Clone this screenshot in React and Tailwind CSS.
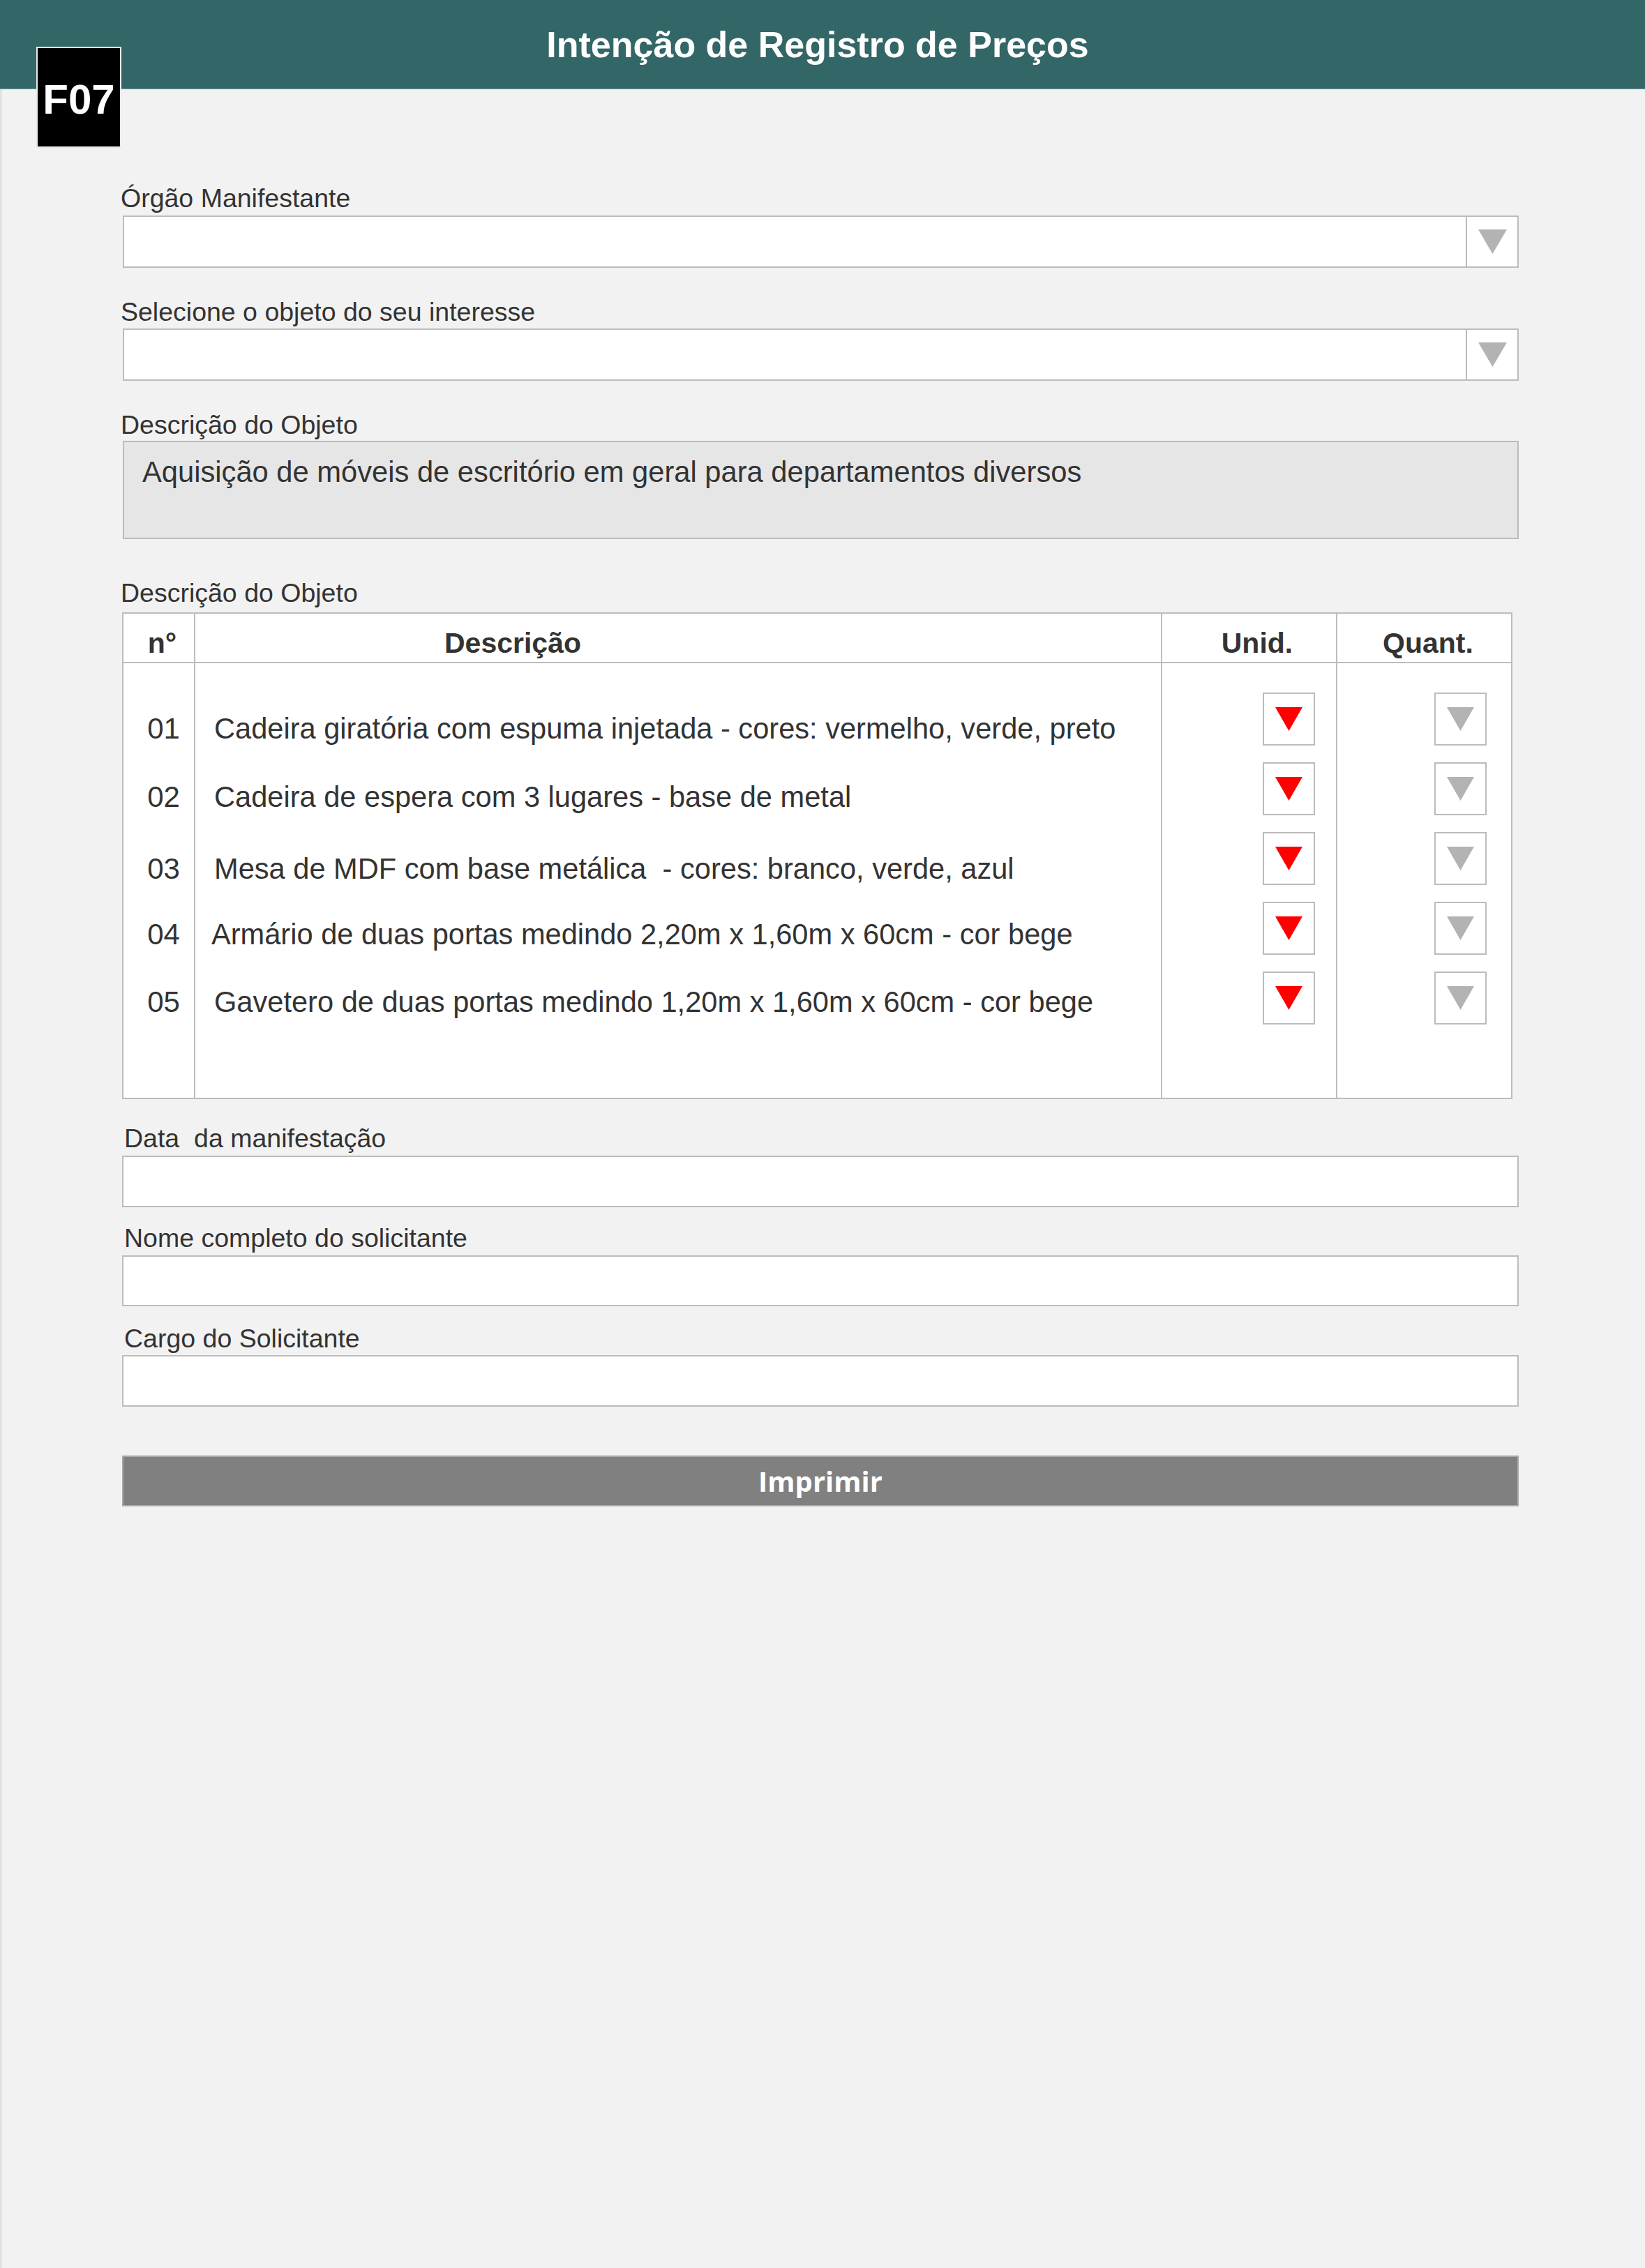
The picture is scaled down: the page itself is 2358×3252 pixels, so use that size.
import React from "react";

function Tri({ w, h, color }) {
  return (
    <svg width={w} height={h} viewBox={`0 0 ${w} ${h}`} className="block">
      <polygon points={`0,0 ${w},0 ${w / 2},${h}`} fill={color} />
    </svg>
  );
}

function Label({ children, className }) {
  return (
    <div className={`text-[37.5px] leading-[37px] h-[37px] whitespace-pre text-[#333333] ${className}`}>
      {children}
    </div>
  );
}

function Select() {
  return (
    <div className="h-[75px] border-2 border-[#bcbcbc] bg-white flex">
      <div className="flex-1" />
      <div className="w-[74px] border-l-2 border-[#bcbcbc] flex items-center justify-center">
        <Tri w={41} h={35} color="#b3b3b3" />
      </div>
    </div>
  );
}

const rows = [
  {
    n: "01",
    text: "Cadeira giratória com espuma injetada - cores: vermelho, verde, preto",
    pt: "pt-[31px]",
    pl: "pl-[27px]",
  },
  {
    n: "02",
    text: "Cadeira de espera com 3 lugares - base de metal",
    pt: "pt-[29px]",
    pl: "pl-[27px]",
  },
  {
    n: "03",
    text: "Mesa de MDF com base metálica  - cores: branco, verde, azul",
    pt: "pt-[32px]",
    pl: "pl-[27px]",
  },
  {
    n: "04",
    text: "Armário de duas portas medindo 2,20m x 1,60m x 60cm - cor bege",
    pt: "pt-[26px]",
    pl: "pl-[23px]",
  },
  {
    n: "05",
    text: "Gavetero de duas portas medindo 1,20m x 1,60m x 60cm - cor bege",
    pt: "pt-[23px]",
    pl: "pl-[27px]",
  },
];

function SmallSelect({ color }) {
  return (
    <div className="w-[75px] h-[76px] border-2 border-[#bcbcbc] bg-white flex items-center justify-center">
      <Tri w={39} h={34} color={color} />
    </div>
  );
}

export default function App() {
  return (
    <div className="relative min-h-[3252px] bg-[#f2f2f2] font-['Liberation_Sans',Arial,sans-serif] text-[#333333]">
      <div className="absolute left-0 top-[128px] bottom-0 w-[3px] bg-[#e2e2e2]" />
      <header className="h-[128px] bg-[#336666] border-b border-[#7a9c9c] flex items-center justify-center pr-[14px]">
        <h1 className="text-[52px] leading-none font-bold text-white">Intenção de Registro de Preços</h1>
      </header>

      <div className="absolute left-[52px] top-[67px] w-[122px] h-[145px] bg-black border-2 border-[#e9e9e9] flex items-center justify-center">
        <span className="text-white font-bold text-[60px] leading-none pt-[6px]">F07</span>
      </div>

      <main className="ml-[176px] w-[2001px]">
        <Label className="mt-[138px] mb-[6px] -ml-[3px]">Órgão Manifestante</Label>
        <Select />

        <Label className="mt-[45px] mb-[5px] -ml-[3px]">Selecione o objeto do seu interesse</Label>
        <Select />

        <Label className="mt-[45px] mb-[4px] -ml-[3px]">Descrição do Objeto</Label>
        <div className="h-[141px] border-2 border-[#bcbcbc] bg-[#e6e6e6] pl-[26px] pt-[22px]">
          <p className="text-[41.7px] leading-[42px] text-[#333333]">
            Aquisição de móveis de escritório em geral para departamentos diversos
          </p>
        </div>

        <Label className="mt-[59px] mb-[9px] -ml-[3px]">Descrição do Objeto</Label>
        <div className="w-[1993px] h-[698px] -ml-[1px] border-2 border-[#bcbcbc] bg-white flex flex-col overflow-hidden">
          <div className="h-[71px] shrink-0 border-b-2 border-[#bcbcbc] flex text-[41px] font-bold text-[#333333]">
            <div className="w-[103px] border-r-2 border-[#bcbcbc] flex items-center justify-center pl-[10px] pt-[16px] leading-none">
              n°
            </div>
            <div className="w-[1386px] border-r-2 border-[#bcbcbc] flex items-center pl-[357px] pt-[16px] leading-none">
              Descrição
            </div>
            <div className="w-[251px] border-r-2 border-[#bcbcbc] flex items-center justify-center pl-[23px] pt-[16px] leading-none">
              Unid.
            </div>
            <div className="flex-1 flex items-center justify-center pl-[11px] pt-[16px] leading-none">
              Quant.
            </div>
          </div>
          <div className="flex-1 flex">
            <div className="w-[103px] border-r-2 border-[#bcbcbc] pt-[42px]">
              {rows.map((r) => (
                <div key={r.n} className={`h-[100px] ${r.pt}`}>
                  <div className="text-[42px] leading-[42px] text-center pl-[14px]">{r.n}</div>
                </div>
              ))}
            </div>
            <div className="w-[1386px] border-r-2 border-[#bcbcbc] pt-[42px]">
              {rows.map((r) => (
                <div key={r.n} className={`h-[100px] ${r.pt}`}>
                  <div className={`text-[41.6px] leading-[42px] whitespace-pre ${r.pl}`}>{r.text}</div>
                </div>
              ))}
            </div>
            <div className="w-[251px] border-r-2 border-[#bcbcbc] pt-[42px] pr-[30px] flex flex-col items-end">
              {rows.map((r) => (
                <div key={r.n} className="h-[100px]">
                  <SmallSelect color="#ff0000" />
                </div>
              ))}
            </div>
            <div className="flex-1 pt-[42px] pr-[35px] flex flex-col items-end">
              {rows.map((r) => (
                <div key={r.n} className="h-[100px]">
                  <SmallSelect color="#b3b3b3" />
                </div>
              ))}
            </div>
          </div>
        </div>

        <Label className="mt-[38px] mb-[6px] ml-[2px]">Data  da manifestação</Label>
        <div className="h-[74px] w-[2002px] -ml-[1px] border-2 border-[#bcbcbc] bg-white" />

        <Label className="mt-[26px] mb-[6px] ml-[2px]">Nome completo do solicitante</Label>
        <div className="h-[73px] w-[2002px] -ml-[1px] border-2 border-[#bcbcbc] bg-white" />

        <Label className="mt-[28px] mb-[5px] ml-[2px]">Cargo do Solicitante</Label>
        <div className="h-[74px] w-[2002px] -ml-[1px] border-2 border-[#bcbcbc] bg-white" />

        <button
          type="button"
          className="mt-[70px] h-[73px] w-[2002px] -ml-[1px] bg-[#808080] border-2 border-[#a9a9a9] flex items-center justify-center font-['Open_Sans',Arial,sans-serif] font-bold text-[40px] leading-none text-white"
        >
          Imprimir
        </button>
      </main>
    </div>
  );
}
